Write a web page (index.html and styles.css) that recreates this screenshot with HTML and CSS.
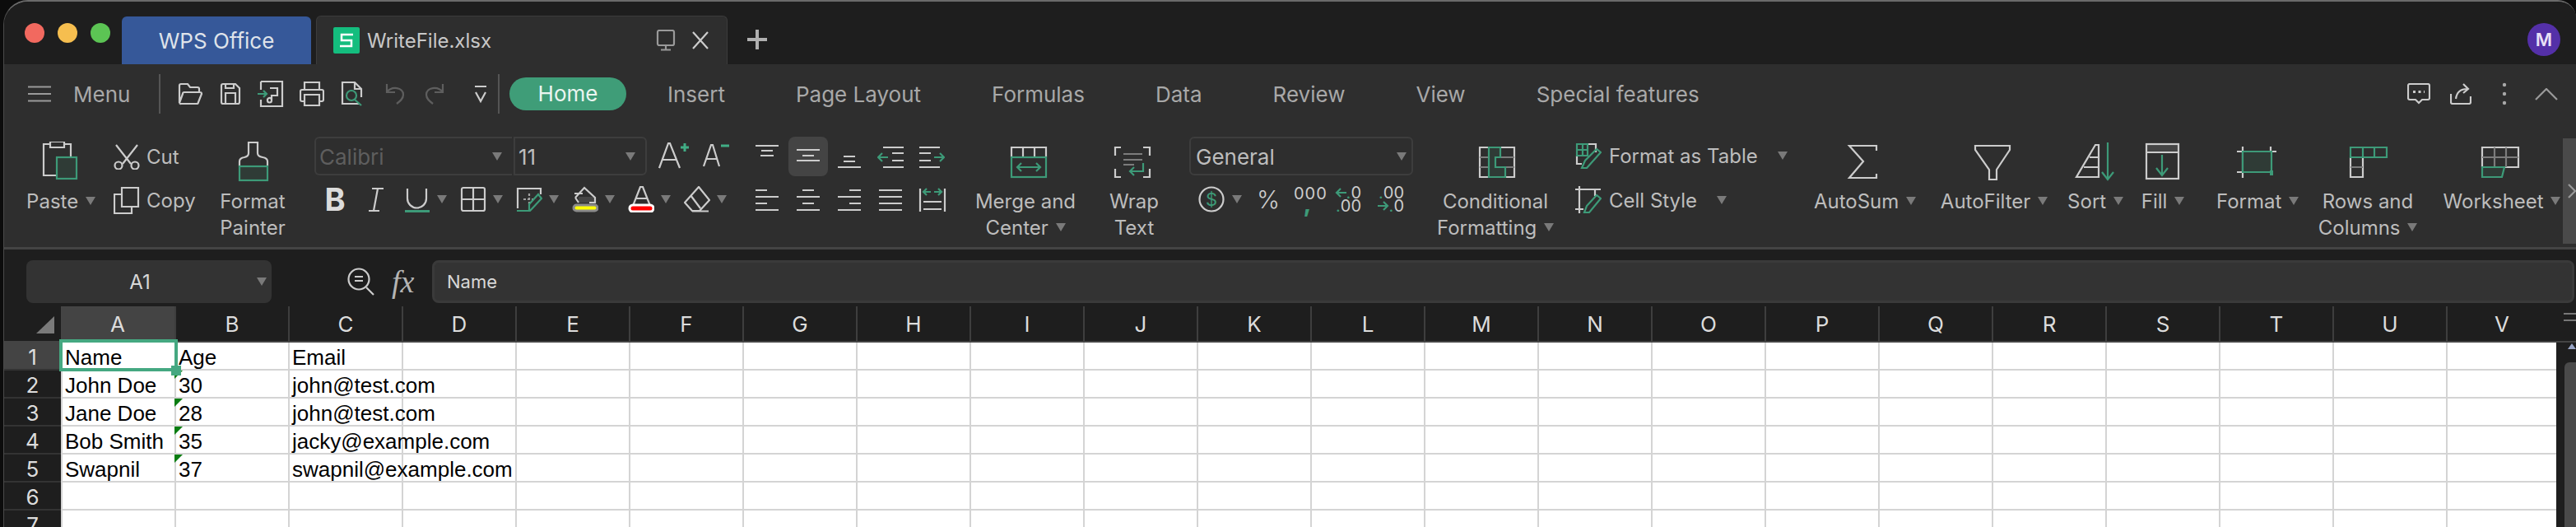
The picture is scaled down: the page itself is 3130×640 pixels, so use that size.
FILE: index.html
```html
<!DOCTYPE html>
<html>
  <head>
    <meta charset="utf-8" />
    <title>WriteFile.xlsx</title>
    <link rel="stylesheet" href="styles.css">
  </head>
  <body>
    <div class="window">

      <!-- title bar -->
      <div class="title_bar">
        <span class="light red"></span>
        <span class="light yellow"></span>
        <span class="light green"></span>
        <div class="tab tab_home">WPS Office</div>
        <div class="tab tab_file">
          <span class="file_badge">
            <svg width="32" height="32" viewBox="0 0 32 32"><path class="s_mark" d="M24 9H10V16H22V23H8"/></svg>
          </span>
          <span class="file_name">WriteFile.xlsx</span>
          <svg class="tab_pin" width="24" height="26" viewBox="0 0 24 26"><path class="ln dim" d="M2 3a2 2 0 0 1 2-2h16a2 2 0 0 1 2 2v14a2 2 0 0 1-2 2H4a2 2 0 0 1-2-2ZM12 19v5M6 24.500H18"/></svg>
          <svg class="tab_close" width="22" height="22" viewBox="0 0 22 22"><path class="ln" d="M2 1L20 21M20 1L2 21"/></svg>
        </div>
        <svg class="tab_add" width="24" height="24" viewBox="0 0 24 24"><path class="plus" d="M12 0V24M0 12H24"/></svg>
        <span class="avatar">M</span>
      </div>

      <!-- menu row -->
      <div class="menu_bar">
        <svg class="burger" width="28" height="20" viewBox="0 0 28 20"><path class="ln dim" d="M0 1.500H28M0 10H28M0 18.500H28"/></svg>
        <span class="menu_label">Menu</span>
        <span class="divider"></span>
        <div class="quick">
          <svg width="32" height="28" viewBox="0 0 32 28"><path class="ln" d="M3 25V4a2 2 0 0 1 2-2h8l3 4h9a2 2 0 0 1 2 2v4M3 25a2 2 0 0 0 2 1h19a2 2 0 0 0 2-2l4-10a2 2 0 0 0-2-2H9a2 2 0 0 0-2 2L3 25"/></svg>
          <svg width="28" height="28" viewBox="0 0 28 28"><path class="ln" d="M3 4a2 2 0 0 1 2-2h15l5 5v17a2 2 0 0 1-2 2H5a2 2 0 0 1-2-2ZM8 26V13H20V26M8 2V7H18V2"/></svg>
          <svg width="32" height="34" viewBox="0 0 32 34"><path class="ln" d="M4 2H30V32H4V24M4 12V2"/><path class="ln" d="M15 10H24V19H17V25a2.500 2.500 0 0 1-5 0a2.500 2.500 0 0 1 5-1"/><path class="ln gr" d="M0 17H11M7 13L11 17L7 21"/></svg>
          <svg width="30" height="32" viewBox="0 0 30 32"><path class="ln" d="M6 11V2H24V11M6 25H3a2 2 0 0 1-2-2V13a2 2 0 0 1 2-2H27a2 2 0 0 1 2 2V23a2 2 0 0 1-2 2H24M6 17H24V30H6Z"/></svg>
          <svg width="30" height="32" viewBox="0 0 30 32"><path class="ln" d="M24 28H3V2H18L26 10V20M18 2V10H26"/><circle class="ln gr" cx="14" cy="18" r="6"/><path class="ln gr" d="M18 23L26 30"/></svg>
          <svg class="off first_off" width="24" height="28" viewBox="0 0 24 28"><path class="ln" d="M2 2V12H12M2 12C8 4 22 6 22 15C22 20 18 23 14 26"/></svg>
          <svg class="off" width="24" height="28" viewBox="0 0 24 28"><path class="ln" d="M22 2V12H12M22 12C16 4 2 6 2 15C2 20 6 23 10 26"/></svg>
          <svg class="more" width="16" height="22" viewBox="0 0 16 22"><path class="ln" d="M1 2H15M2 9L8 20L14 9"/></svg>
        </div>
        <span class="divider"></span>
        <div class="tabs">
          <span class="tab_pill">Home</span>
          <span>Insert</span>
          <span>Page Layout</span>
          <span>Formulas</span>
          <span>Data</span>
          <span>Review</span>
          <span>View</span>
          <span>Special features</span>
        </div>
        <div class="bar_right">
          <svg width="28" height="26" viewBox="0 0 28 26"><path class="ln" d="M3 1H25a2 2 0 0 1 2 2V18a2 2 0 0 1-2 2H18L14 24L10 20H3a2 2 0 0 1-2-2V3a2 2 0 0 1 2-2Z"/><path class="ln dash" d="M7 10.500H21"/></svg>
          <svg width="26" height="26" viewBox="0 0 26 26"><path class="ln" d="M1 13V23a2 2 0 0 0 2 2H23a2 2 0 0 0 2-2V16M7 19C8 11 13 7 21 7M16 1L22 7L16 12"/></svg>
          <svg class="dots" width="8" height="30" viewBox="0 0 8 30"><circle cx="4" cy="4" r="2.200"/><circle cx="4" cy="15" r="2.200"/><circle cx="4" cy="26" r="2.200"/></svg>
          <svg width="28" height="15" viewBox="0 0 28 15"><path class="ln dim" d="M1 14L14 1L27 14"/></svg>
        </div>
      </div>

      <!-- ribbon -->
      <div class="ribbon">
        <div class="big">
          <svg width="56" height="50" viewBox="0 0 56 50"><path class="ln" d="M15 3H7V41H23M32 3H40V18M15 0H32V7H15Z"/><rect class="ln gr gf" x="23" y="19" width="24" height="26"/></svg>
          <div class="lbl">Paste <i class="caret"></i></div>
        </div>

        <div class="clip">
          <div class="clip_row">
            <svg width="32" height="32" viewBox="0 0 32 32"><path class="ln" d="M3 2L21 25M29 2L11 25"/><circle class="ln" cx="6" cy="27" r="4.500"/><circle class="ln" cx="26" cy="27" r="4.500"/></svg>
            <span>Cut</span>
          </div>
          <div class="clip_row">
            <svg width="32" height="34" viewBox="0 0 32 34"><path class="ln" d="M10 2H30V25H10ZM10 10H1V33H22V25"/></svg>
            <span>Copy</span>
          </div>
        </div>

        <div class="big">
          <svg width="56" height="50" viewBox="0 0 56 50"><path class="ln" d="M12 30V24Q12 20 18 19Q23 18 23 14V1H34V14Q34 18 40 19Q46 20 46 24V30"/><rect class="ln gr gf" x="12" y="30" width="34" height="17"/></svg>
          <div class="lbl">Format<br>Painter</div>
        </div>

        <div class="two_rows font_group">
          <div class="row_top">
            <div class="select font_name"><span>Calibri</span><i class="caret"></i></div>
            <div class="select font_size"><span>11</span><i class="caret"></i></div>
            <svg class="grow" width="38" height="36" viewBox="0 0 38 36"><path class="ln" d="M1 32L12 2H14L26 32M5 22H22"/><path class="ln plus_gr" d="M27 7H37M32 2V12"/></svg>
            <svg class="shrink" width="34" height="36" viewBox="0 0 34 36"><path class="ln" d="M1 30L10 4H12L20 30M4 21H17"/><path class="ln plus_gr" d="M22 5H32"/></svg>
          </div>
          <div class="row_bottom">
            <span class="b_mark">B</span>
            <svg class="t_i" width="32" height="32" viewBox="0 0 32 32"><path class="ln" d="M10 3H24M6 30H19M17 3L12 30"/></svg>
            <div class="tool">
              <svg width="32" height="32" viewBox="0 0 32 32"><path class="ln" d="M4 3V15a11 11 0 0 0 23 0V3"/><path class="ln gr wide" d="M1 30.500H31"/></svg><i class="caret"></i>
            </div>
            <div class="tool">
              <svg width="32" height="32" viewBox="0 0 32 32"><rect class="ln" x="2" y="2" width="28" height="28" rx="2"/><path class="ln" d="M16 2V30M2 16H30"/></svg><i class="caret"></i>
            </div>
            <div class="tool">
              <svg width="32" height="32" viewBox="0 0 32 32"><path class="ln" d="M2 27V3H30V10"/><path class="ln dash2" d="M16 9V23M9 16H23"/><path class="ln gr" d="M1 30H17L31 15L27 10L16 22V30"/></svg><i class="caret"></i>
            </div>
            <div class="tool">
              <svg width="32" height="32" viewBox="0 0 32 32"><rect class="tone" x="8" y="13" width="19" height="7"/><path class="ln" d="M4 14L15 2L28 14V20H21M8 20L4 14M3 9H13"/><rect class="paint_y" x="2" y="23" width="29" height="7" rx="3.500"/></svg><i class="caret"></i>
            </div>
            <div class="tool">
              <svg width="32" height="32" viewBox="0 0 32 32"><path class="ln" d="M6 24L15 1H18L27 24M9 15H24"/><rect class="paint_r" x="2" y="23" width="29" height="8" rx="4"/></svg><i class="caret"></i>
            </div>
            <div class="tool">
              <svg width="32" height="32" viewBox="0 0 32 32"><path class="ln" d="M18 1L31 17L19 30H10L1 20ZM8 11L20 27M10 30.500H30"/></svg><i class="caret"></i>
            </div>
          </div>
        </div>

        <div class="align_group">
          <svg width="32" height="48" viewBox="0 0 32 48"><path class="ln" d="M2 11H30M9 17H23M8 23H24"/></svg>
          <svg class="picked" width="48" height="48" viewBox="0 0 48 48"><path class="ln" d="M10 16H38M17 23H31M10 29H38"/></svg>
          <svg width="32" height="48" viewBox="0 0 32 48"><path class="ln" d="M9 24H23M9 30H23M2 37H30"/></svg>
          <svg width="32" height="48" viewBox="0 0 32 48"><path class="ln" d="M7 13H32M18 20H32M18 29H32M7 37H32"/><path class="ln gr" d="M13 25H1M6 20L1 25L6 30"/></svg>
          <svg width="32" height="48" viewBox="0 0 32 48"><path class="ln" d="M1 13H26M1 20H15M1 29H15M1 37H26"/><path class="ln gr" d="M19 25H31M26 20L31 25L26 30"/></svg>
          <svg width="32" height="32" viewBox="0 0 32 32"><path class="ln" d="M2 5H16M2 13H30M2 21H16M2 29H30"/></svg>
          <svg width="32" height="32" viewBox="0 0 32 32"><path class="ln" d="M9 5H23M2 13H30M9 21H23M2 29H30"/></svg>
          <svg width="32" height="32" viewBox="0 0 32 32"><path class="ln" d="M16 5H30M2 13H30M16 21H30M2 29H30"/></svg>
          <svg width="32" height="32" viewBox="0 0 32 32"><path class="ln" d="M2 5H30M2 13H30M2 21H30M2 29H30"/></svg>
          <svg width="34" height="32" viewBox="0 0 34 32"><path class="ln" d="M2 3V31M32 3V31M6 19H28M6 28H28"/><path class="ln gr" d="M6 7H15M10 3L6 7L10 11M28 7H19M24 3L28 7L24 11"/></svg>
        </div>

        <div class="big">
          <svg width="56" height="50" viewBox="0 0 56 50"><path class="ln" d="M11 19V7H53V19M25 7V19M39 7V19"/><rect class="ln gr" x="11" y="19" width="42" height="24"/><path class="ln gr" d="M18 31H46M23 26L18 31L23 36M41 26L46 31L41 36"/></svg>
          <div class="lbl">Merge and<br>Center <i class="caret"></i></div>
        </div>

        <div class="big">
          <svg width="56" height="50" viewBox="0 0 56 50"><path class="ln" d="M12 7H5V17M39 7H47V17M5 33V43H12M47 33V43H39"/><path class="ln mid" d="M15 15H38M15 22H38M15 28H28"/><path class="ln gr" d="M39 26V36H23M28 31L23 36L28 41"/></svg>
          <div class="lbl">Wrap<br>Text</div>
        </div>

        <div class="two_rows number_group">
          <div class="row_top">
            <div class="select number_select"><span>General</span><i class="caret"></i></div>
          </div>
          <div class="row_bottom">
            <svg class="money" width="32" height="32" viewBox="0 0 32 32"><circle class="ln" cx="16" cy="16" r="14.500"/><text class="dollar" x="16" y="24" text-anchor="middle">$</text></svg>
            <i class="caret caret_money"></i>
            <span class="percent">%</span>
            <div class="thousand"><span>000</span><b>,</b></div>
            <div class="decimals dec_left">
              <div class="dec_line"><svg width="14" height="12" viewBox="0 0 14 12"><path class="ln gr" d="M14 6H2M7 1L2 6L7 11"/></svg><b>.</b>0</div>
              <div class="dec_line"><b>.</b>00</div>
            </div>
            <div class="decimals dec_right">
              <div class="dec_line"><b>.</b>00</div>
              <div class="dec_line"><svg width="14" height="12" viewBox="0 0 14 12"><path class="ln gr" d="M0 6H12M7 1L12 6L7 11"/></svg><b>.</b>0</div>
            </div>
          </div>
        </div>

        <div class="big">
          <svg width="56" height="50" viewBox="0 0 56 50"><path class="ln" d="M9 7H51V43H9Z" /><path class="ln mid" d="M9 19H51M9 31H51"/><path class="ln gr gf" d="M20 7H34V19H28V31H40V43H20V31V19V7Z"/></svg>
          <div class="lbl">Conditional<br>Formatting <i class="caret"></i></div>
        </div>

        <div class="two_rows styles_group">
          <div class="style_row">
            <svg width="32" height="32" viewBox="0 0 32 32"><path class="ln" d="M2 16V26H8M15 2H25V12"/><path class="ln gr" d="M2 2H15V16H2ZM9 2V16M2 9H15"/><path class="ln gr" d="M8 31H14L31 12L26 8L12 22Z"/></svg>
            <span>Format as Table</span><i class="caret"></i>
          </div>
          <div class="style_row">
            <svg width="32" height="34" viewBox="0 0 32 34"><path class="ln" d="M0 4H31M5 0V33M0 28H10M24 4V12"/><path class="ln gr" d="M11 32H17L31 15L26 11L14 24Z"/></svg>
            <span>Cell Style</span><i class="caret"></i>
          </div>
        </div>

        <div class="big">
          <svg width="56" height="50" viewBox="0 0 56 50"><path class="ln" d="M42 11V5H9L26 24L9 44H42V39"/></svg>
          <div class="lbl">AutoSum <i class="caret"></i></div>
        </div>

        <div class="big">
          <svg width="56" height="50" viewBox="0 0 56 50"><path class="ln" d="M5 5H47V10L31 34V46H22V34L5 10Z"/></svg>
          <div class="lbl">AutoFilter <i class="caret"></i></div>
        </div>

        <div class="big">
          <svg width="56" height="50" viewBox="0 0 56 50"><path class="ln" d="M32 4V43H5L28 4ZM21 19H32M14 31H32"/><path class="ln gr" d="M43 1V46M36 37L43 46L50 37"/></svg>
          <div class="lbl">Sort <i class="caret"></i></div>
        </div>

        <div class="big">
          <svg width="56" height="50" viewBox="0 0 56 50"><rect class="tone" x="8" y="3" width="38" height="10"/><rect class="ln" x="8" y="3" width="39" height="42"/><path class="ln" d="M8 13H47"/><path class="ln gr" d="M27 16V41M20 32L27 41L34 32"/></svg>
          <div class="lbl">Fill <i class="caret"></i></div>
        </div>

        <div class="big">
          <svg width="56" height="50" viewBox="0 0 56 50"><path class="ln" d="M3 12H51M10 6V44M44 6V12M3 37H10"/><path class="ln gr gf" d="M10 12H45V37H10Z"/><rect class="dot_gr" x="43" y="35" width="4" height="6"/></svg>
          <div class="lbl">Format <i class="caret"></i></div>
        </div>

        <div class="big">
          <svg width="56" height="50" viewBox="0 0 56 50"><path class="ln" d="M7 19V43H22V19"/><path class="ln mid" d="M7 31H22"/><path class="ln gr" d="M7 7H51V19H7ZM22 7V19M36 7V19"/></svg>
          <div class="lbl">Rows and<br>Columns <i class="caret"></i></div>
        </div>

        <div class="big big_last">
          <svg width="56" height="50" viewBox="0 0 56 50"><path class="ln" d="M4 31V7H48V31H32"/><path class="ln mid" d="M4 19H48"/><path class="ln mid" d="M19 7V31M33 7V31"/><path class="ln gr gf" d="M4 31H31L28 43H4Z"/></svg>
          <div class="lbl">Worksheet <i class="caret"></i></div>
        </div>

        <div class="ribbon_more">
          <svg width="10" height="18" viewBox="0 0 10 18"><path class="ln dim" d="M1 1L9 9L1 17"/></svg>
        </div>
      </div>

      <!-- formula bar -->
      <div class="formula_bar">
        <div class="name_box"><span>A1</span><i class="caret"></i></div>
        <svg class="fx_zoom" width="34" height="34" viewBox="0 0 34 34"><circle class="ln" cx="14" cy="14" r="12.500"/><path class="ln" d="M9 11H19M9 16H19M23 24L32 33"/></svg>
        <span class="fx_mark">fx</span>
        <div class="formula_input">Name</div>
      </div>

      <!-- column letters -->
      <div class="col_heads">
        <div class="corner"><i></i></div>
        <div class="col col_a picked_head">A</div>
        <div class="col">B</div><div class="col">C</div><div class="col">D</div><div class="col">E</div>
        <div class="col">F</div><div class="col">G</div><div class="col">H</div><div class="col">I</div>
        <div class="col">J</div><div class="col">K</div><div class="col">L</div><div class="col">M</div>
        <div class="col">N</div><div class="col">O</div><div class="col">P</div><div class="col">Q</div>
        <div class="col">R</div><div class="col">S</div><div class="col">T</div><div class="col">U</div>
        <div class="col col_last">V</div>
        <div class="split_grip"></div>
      </div>

      <!-- sheet -->
      <div class="sheet">
        <div class="row_heads">
          <div class="rh rh_one">1</div>
          <div class="rh">2</div>
          <div class="rh">3</div>
          <div class="rh">4</div>
          <div class="rh">5</div>
          <div class="rh">6</div>
          <div class="rh">7</div>
        </div>
        <div class="grid">
          <div class="row"><span class="cell cell_a">Name</span><span class="cell">Age</span><span class="cell">Email</span></div>
          <div class="row"><span class="cell cell_a">John Doe</span><span class="cell flag">30</span><span class="cell">john@test.com</span></div>
          <div class="row"><span class="cell cell_a">Jane Doe</span><span class="cell flag">28</span><span class="cell">john@test.com</span></div>
          <div class="row"><span class="cell cell_a">Bob Smith</span><span class="cell flag">35</span><span class="cell">jacky@example.com</span></div>
          <div class="row"><span class="cell cell_a">Swapnil</span><span class="cell flag">37</span><span class="cell">swapnil@example.com</span></div>
          <div class="row"></div>
          <div class="row"></div>
          <div class="cursor"><i></i></div>
        </div>
        <div class="v_scroll">
          <i class="v_up"></i>
          <div class="v_thumb"></div>
        </div>
      </div>

    </div>
  </body>
</html>
```

FILE: styles.css
```css
html, body
{
  margin: 0;
  padding: 0;
  width: 100%;
  height: 100%;
  overflow: hidden;
  background-color: #0c0c0c;
}
svg
{
  display: block;
  flex: none;
}
.window
{
  box-sizing: border-box;
  width: 3126px;
  height: 640px;
  margin-left: 4px;
  display: flex;
  flex-direction: column;
  overflow: hidden;
  border-top: 2px solid #6a6a6a;
  border-left: 1px solid #4a4a4a;
  border-radius: 30px 22px 0 0;
  background-color: #1e1e1e;
  font-family: "Inter", "Noto Sans", sans-serif;
  color: #bdbdbd;
}

/* line work ======================================== */

.ln
{
  fill: none;
  stroke: #cccccc;
  stroke-width: 2.200;
}
.ln.dim
{
  stroke: #9a9a9a;
}
.ln.mid
{
  stroke: #7c7c7c;
}
.ln.gr
{
  stroke: #3d9a78;
}
.ln.gf
{
  fill: #2f3b36;
}
.ln.wide
{
  stroke-width: 3;
}
.ln.plus_gr
{
  stroke: #41ad85;
  stroke-width: 3;
}
.ln.dash
{
  stroke-width: 3;
  stroke-dasharray: 3 3.500;
}
.ln.dash2
{
  stroke: #a0a0a0;
  stroke-dasharray: 3 2;
}
.tone
{
  fill: #454545;
}
.dot_gr
{
  fill: #3d9a78;
}
.paint_y
{
  fill: #ffff00;
  stroke: #8a8a8a;
  stroke-width: 3;
}
.paint_r
{
  fill: #ff0000;
  stroke: #ffffff;
  stroke-width: 3;
}
.caret
{
  display: inline-block;
  width: 0;
  height: 0;
  border-left: 6px solid transparent;
  border-right: 6px solid transparent;
  border-top: 10px solid #7a7a7a;
  flex: none;
}

/* title bar ======================================== */

.title_bar
{
  height: 76px;
  flex: none;
  display: flex;
  align-items: flex-end;
  background-color: #1e1e1e;
}
.light
{
  width: 24px;
  height: 24px;
  border-radius: 50%;
  margin-left: 16px;
  align-self: flex-start;
  margin-top: 26px;
  flex: none;
}
.light.red
{
  margin-left: 25px;
  background-color: #f2695f;
}
.light.yellow
{
  background-color: #f6be4f;
}
.light.green
{
  background-color: #5cc454;
}
.tab
{
  box-sizing: border-box;
  height: 58px;
  display: flex;
  align-items: center;
  font-size: 26px;
  flex: none;
}
.tab_home
{
  width: 230px;
  margin-left: 14px;
  justify-content: center;
  border-radius: 6px 6px 0 0;
  background-color: #365899;
  color: #dfe3ea;
}
.tab_file
{
  width: 500px;
  height: 59px;
  margin-left: 6px;
  padding-left: 20px;
  border: 1px solid #3c3c3c;
  border-bottom: 0;
  border-radius: 6px 6px 0 0;
  background-color: #2e2e2e;
  color: #c8c8c8;
  font-size: 24px;
}
.file_badge
{
  width: 32px;
  height: 32px;
  border-radius: 2px;
  background-color: #14bd7e;
}
.s_mark
{
  fill: none;
  stroke: #ffffff;
  stroke-width: 2.500;
}
.file_name
{
  margin-left: 9px;
}
.tab_pin
{
  margin-left: auto;
}
.tab_close
{
  margin-left: 19px;
  margin-right: 21px;
}
.plus
{
  fill: none;
  stroke: #b0b0b0;
  stroke-width: 4;
}
.tab_add
{
  align-self: flex-start;
  margin-top: 34px;
  margin-left: 24px;
}
.avatar
{
  width: 40px;
  height: 40px;
  margin-left: auto;
  margin-right: 19px;
  align-self: flex-start;
  margin-top: 26px;
  border-radius: 50%;
  background-color: #5430a8;
  color: #e8e0f6;
  font-size: 22px;
  font-weight: 600;
  line-height: 40px;
  text-align: center;
  flex: none;
}

/* menu row ========================================= */

.menu_bar
{
  height: 72px;
  flex: none;
  display: flex;
  align-items: center;
  background-color: #2e2e2e;
  font-size: 26px;
}
.burger
{
  margin-left: 29px;
}
.menu_label
{
  margin-left: 27px;
  width: 66px;
  color: #a8a8a8;
}
.divider
{
  width: 2px;
  height: 48px;
  background-color: #555;
  flex: none;
}
.menu_label + .divider
{
  margin-left: 38px;
}
.quick
{
  display: flex;
  align-items: center;
  margin-left: 20px;
  width: 390px;
  flex: none;
}
.quick svg
{
  margin-right: 19px;
}
.quick .off
{
  opacity: 0.3;
  margin-right: 24px;
}
.quick .first_off
{
  margin-left: 6px;
}
.quick .more
{
  margin-left: 12px;
  margin-right: 0;
}
.tabs
{
  display: flex;
  align-items: center;
  gap: 86px;
  margin-left: 12px;
  color: #a8a8a8;
}
.tab_pill
{
  width: 142px;
  height: 40px;
  margin-right: -36px;
  border-radius: 20px;
  background-color: #3f9d78;
  color: #eaf5f0;
  line-height: 40px;
  text-align: center;
}
.bar_right
{
  display: flex;
  align-items: center;
  margin-left: auto;
  margin-right: 22px;
}
.bar_right svg + svg
{
  margin-left: 24px;
}
.bar_right .dots
{
  margin-left: 36px;
  fill: #a8a8a8;
}
.bar_right .dots + svg
{
  margin-left: 33px;
}

/* ribbon =========================================== */

.ribbon
{
  position: relative;
  box-sizing: border-box;
  height: 153px;
  flex: none;
  display: grid;
  grid-template-columns: 108px 134px 90px 548px 266px 160px 104px 310px 154px 296px 152px 162px 84px 80px 150px 118px 176px;
  padding-left: 15px;
  border-bottom: 3px solid #444;
  background-color: #2e2e2e;
  font-size: 24px;
  line-height: 32px;
}
.big
{
  display: flex;
  flex-direction: column;
  align-items: center;
  padding-top: 22px;
  text-align: center;
}
.big_last
{
  padding-left: 32px;
}
.lbl
{
  margin-top: 7px;
  white-space: nowrap;
}
.lbl .caret
{
  vertical-align: 4px;
  margin-left: 2px;
}
.clip
{
  padding-left: 10px;
  padding-top: 22px;
}
.clip_row
{
  display: flex;
  align-items: center;
  height: 36px;
  gap: 8px;
}
.clip_row span
{
  padding-top: 2px;
}
.clip_row + .clip_row
{
  margin-top: 17px;
}
.two_rows
{
  padding-top: 16px;
}
.font_group
{
  padding-left: 30px;
}
.row_top
{
  display: flex;
  align-items: center;
  height: 47px;
}
.row_bottom
{
  display: flex;
  align-items: center;
  height: 32px;
  margin-top: 13px;
}
.select
{
  box-sizing: border-box;
  height: 47px;
  display: flex;
  align-items: center;
  justify-content: space-between;
  padding: 0 12px 0 4px;
  border: 2px solid #3d3d3d;
  font-size: 26px;
  flex: none;
}
.select span
{
  padding-top: 2px;
}
.font_name
{
  width: 240px;
  border-right: 0;
  border-radius: 6px 0 0 6px;
  color: #5e5e5e;
}
.font_size
{
  width: 162px;
  margin-left: 2px;
  border-radius: 0 6px 6px 0;
}
.grow
{
  margin-left: 14px;
}
.shrink
{
  margin-left: 16px;
}
.b_mark
{
  width: 32px;
  margin-left: 9px;
  color: #dcdcdc;
  font-size: 38px;
  font-weight: 700;
  text-align: center;
}
.t_i
{
  margin-left: 19px;
}
.tool
{
  display: flex;
  align-items: center;
  gap: 8px;
  width: 68px;
  flex: none;
}
.t_i + .tool
{
  margin-left: 17px;
}
.align_group
{
  display: grid;
  grid-template-columns: repeat(5, 50px);
  grid-template-rows: 48px 32px;
  row-gap: 12px;
  padding-left: 16px;
  padding-top: 16px;
}
.picked
{
  border-radius: 8px;
  background-color: #444;
  margin-left: -8px;
}
.number_group
{
  padding-left: 15px;
}
.number_select
{
  width: 272px;
  padding: 0 6px;
  border-radius: 6px;
}
.money
{
  margin-left: 11px;
}
.dollar
{
  fill: #3d9a78;
  font-size: 22px;
}
.caret_money
{
  margin-left: 9px;
}
.percent
{
  width: 25px;
  margin-left: 18px;
  font-size: 30px;
  font-weight: 300;
  text-align: center;
  color: #cccccc;
}
.thousand
{
  width: 34px;
  height: 32px;
  margin-left: 20px;
  font-size: 20px;
  line-height: 18px;
  text-align: center;
  letter-spacing: 1px;
  color: #cccccc;
}
.thousand b
{
  display: block;
  height: 14px;
  line-height: 4px;
  font-size: 30px;
  color: #3d9a78;
}
.decimals
{
  height: 32px;
  font-size: 20px;
  line-height: 16px;
  color: #cccccc;
  white-space: nowrap;
  flex: none;
}
.decimals b
{
  font-weight: 400;
  color: #3d9a78;
}
.dec_line
{
  display: flex;
  align-items: center;
  justify-content: flex-end;
  height: 16px;
}
.dec_left
{
  width: 32px;
  margin-left: 16px;
}
.dec_right
{
  width: 30px;
  margin-left: 22px;
}
.styles_group
{
  padding-left: 20px;
  padding-top: 22px;
}
.style_row
{
  display: flex;
  align-items: center;
  height: 34px;
  gap: 9px;
}
.style_row span
{
  padding-top: 2px;
}
.style_row + .style_row
{
  margin-top: 20px;
}
.style_row .caret
{
  margin-left: 15px;
}
.ribbon_more
{
  position: absolute;
  top: 18px;
  right: 0;
  width: 16px;
  height: 128px;
  display: flex;
  align-items: center;
  justify-content: flex-end;
  background-color: #4a4a4a;
}

/* formula bar ====================================== */

.formula_bar
{
  box-sizing: border-box;
  height: 69px;
  flex: none;
  display: flex;
  align-items: center;
  padding-top: 9px;
}
.name_box
{
  position: relative;
  box-sizing: border-box;
  width: 298px;
  height: 52px;
  margin-left: 27px;
  padding-right: 22px;
  display: flex;
  align-items: center;
  justify-content: center;
  border-radius: 8px;
  background-color: #333;
  color: #d8d8d8;
  font-size: 24px;
  flex: none;
}
.name_box .caret
{
  position: absolute;
  right: 6px;
  top: 21px;
}
.fx_zoom
{
  margin-left: 92px;
}
.fx_mark
{
  margin-left: 20px;
  width: 49px;
  font-family: "Liberation Serif", serif;
  font-style: italic;
  font-size: 38px;
  color: #b4b4b4;
}
.formula_input
{
  box-sizing: border-box;
  width: 2603px;
  height: 52px;
  display: flex;
  align-items: center;
  padding-left: 15px;
  border: 3px solid #3a3a3a;
  border-radius: 8px;
  background-color: #333;
  color: #d8d8d8;
  font-size: 22px;
  flex: none;
}

/* sheet ============================================ */

.col_heads
{
  position: relative;
  box-sizing: border-box;
  height: 44px;
  flex: none;
  display: flex;
  border-bottom: 2px solid #444;
  color: #dcdcdc;
  font-size: 26px;
}
.corner
{
  width: 69px;
  flex: none;
}
.corner i
{
  display: block;
  width: 0;
  height: 0;
  margin: 12px 0 0 39px;
  border-bottom: 21px solid #7a7a7a;
  border-left: 22px solid transparent;
}
.col
{
  box-sizing: border-box;
  width: 138px;
  height: 42px;
  display: flex;
  align-items: center;
  justify-content: center;
  border-right: 2px solid #3e3e3e;
  flex: none;
}
.col_a
{
  width: 140px;
}
.col_last
{
  width: 132px;
  border-right: 0;
}
.picked_head
{
  background-color: #444;
}
.split_grip
{
  position: absolute;
  right: 0;
  top: 8px;
  width: 15px;
  height: 6px;
  border-top: 2px solid #777;
  border-bottom: 2px solid #777;
}
.sheet
{
  flex: 1;
  display: flex;
  min-height: 0;
}
.row_heads
{
  width: 69px;
  flex: none;
  color: #dcdcdc;
  font-size: 26px;
}
.rh
{
  box-sizing: border-box;
  height: 34px;
  display: flex;
  align-items: center;
  justify-content: center;
  padding-top: 2px;
  border-bottom: 2px solid #333;
}
.rh_one
{
  background-color: #444;
}
.grid
{
  position: relative;
  width: 3032px;
  flex: none;
  background-color: #fff;
  background-image: repeating-linear-gradient(to right, #d4d4d4 0, #d4d4d4 2px, transparent 2px, transparent 138px);
  color: #000;
  font-family: "Liberation Sans", Arial, sans-serif;
  font-size: 26px;
}
.row
{
  box-sizing: border-box;
  height: 34px;
  display: flex;
  border-bottom: 2px solid #d4d4d4;
  line-height: 37px;
}
.cell
{
  position: relative;
  box-sizing: border-box;
  width: 138px;
  padding-left: 5px;
  white-space: nowrap;
  flex: none;
}
.flag::before
{
  content: "";
  position: absolute;
  left: 0;
  top: 0;
  border-top: 10px solid #0a7d12;
  border-right: 10px solid transparent;
}
.cursor
{
  position: absolute;
  left: -2px;
  top: -4px;
  width: 144px;
  height: 39px;
  box-sizing: border-box;
  border: 4px solid #45a881;
}
.cursor i
{
  position: absolute;
  right: -8px;
  bottom: -9px;
  width: 12px;
  height: 12px;
  background-color: #45a881;
}
.v_scroll
{
  position: relative;
  flex: 1;
}
.v_up
{
  position: absolute;
  right: 0;
  top: 1px;
  border-left: 5px solid transparent;
  border-right: 5px solid transparent;
  border-bottom: 7px solid #98a4c4;
}
.v_thumb
{
  position: absolute;
  right: 0;
  top: 24px;
  width: 14px;
  height: 220px;
  border-radius: 6px 0 0 0;
  background-color: #4a4a4a;
}
```
